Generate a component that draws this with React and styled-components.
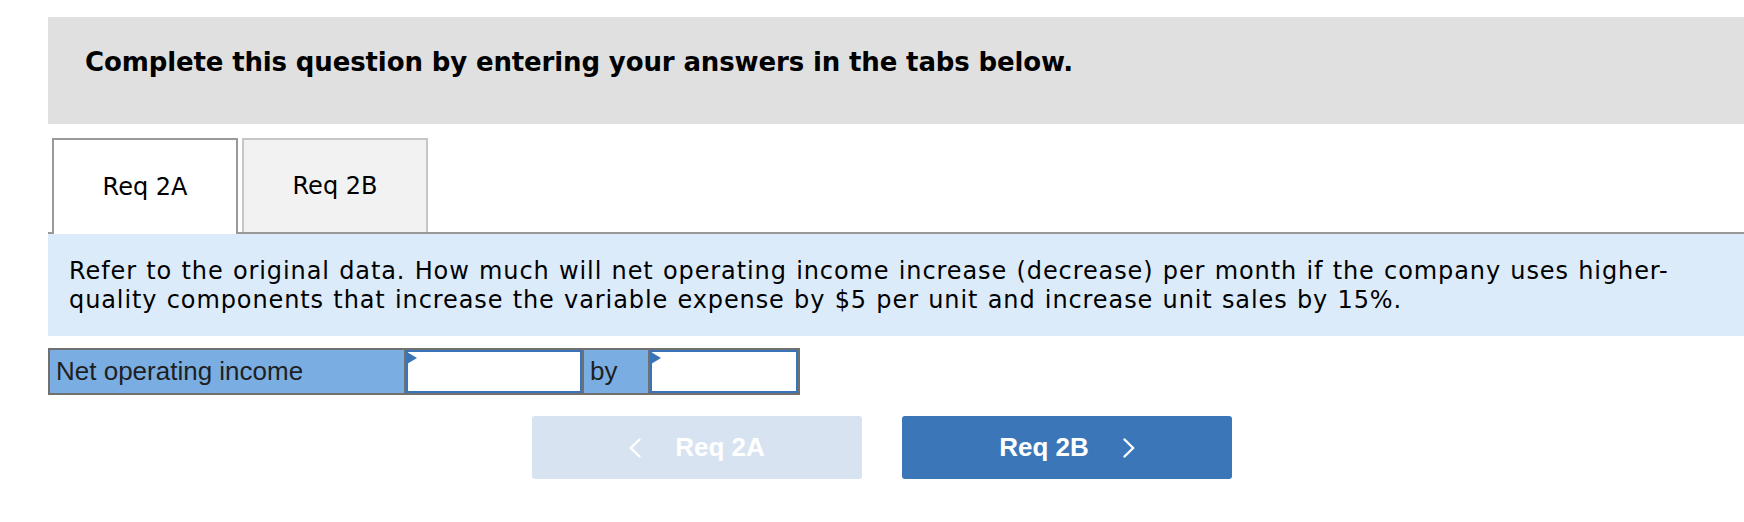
import React from 'react';
import styled, { createGlobalStyle } from 'styled-components';

const GlobalStyle = createGlobalStyle`
  html, body {
    margin: 0;
    padding: 0;
    background: #ffffff;
    overflow: hidden;
  }
`;

const Page = styled.div`
  padding: 17px 0 0 48px;
  font-family: "DejaVu Sans", Verdana, sans-serif;
  color: #000;
`;

const Instructions = styled.div`
  background: #e0e0e0;
  height: 107px;
  box-sizing: border-box;
  padding: 30px 0 0 37px;
`;

const Heading = styled.h2`
  margin: 0;
  font-size: 26px;
  line-height: 30px;
  font-weight: bold;
  letter-spacing: -0.13px;
`;

const TabBar = styled.div`
  display: flex;
  align-items: flex-end;
  gap: 4px;
  margin-top: 14px;
  padding-left: 4px;
  border-bottom: 2px solid #999999;
  height: 94px;
`;

const Tab = styled.button`
  box-sizing: border-box;
  width: 186px;
  height: ${props => (props.$active ? '96px' : '94px')};
  margin-bottom: ${props => (props.$active ? '-2px' : '0')};
  padding: 0;
  border: 2px solid ${props => (props.$active ? '#999999' : '#c6c6c6')};
  border-bottom: ${props => (props.$active ? 'none' : '0')};
  background: ${props => (props.$active ? '#ffffff' : '#f2f2f2')};
  font-family: "DejaVu Sans", Verdana, sans-serif;
  font-size: 24px;
  color: #000;
  cursor: pointer;
`;

const QuestionPanel = styled.div`
  background: #dcebf9;
  box-sizing: border-box;
  height: 102px;
  padding: 23px 50px 0 21px;
`;

const QuestionText = styled.p`
  margin: 0;
  font-size: 24px;
  line-height: 29px;
  letter-spacing: 0.9px;
  word-spacing: 0.8px;
`;

const AnswerRow = styled.div`
  display: flex;
  width: 752px;
  height: 47px;
  box-sizing: border-box;
  margin-top: 12px;
  border: 2px solid #707070;
  font-family: "Liberation Sans", Arial, sans-serif;
  font-size: 26px;
  color: #1f1f1f;
`;

const Cell = styled.div`
  position: relative;
  width: ${props => props.$width}px;
  flex: none;
  display: flex;
  align-items: center;
  box-sizing: content-box;
  padding-left: ${props => props.$pad || 0}px;
  background: ${props => (props.$label ? '#7aaee3' : '#ffffff')};
  border-right: ${props => (props.$last ? 'none' : '2px solid #707070')};
`;

const AnswerInput = styled.input`
  box-sizing: border-box;
  width: 100%;
  height: 100%;
  margin: 0;
  border: 2px solid #3a74b8;
  background: #ffffff;
  font-family: "Liberation Sans", Arial, sans-serif;
  font-size: 24px;
  outline: none;
`;

const InputFlag = styled.span`
  position: absolute;
  left: 1px;
  top: 2px;
  width: 0;
  height: 0;
  border-top: 6.5px solid transparent;
  border-bottom: 6.5px solid transparent;
  border-left: 10px solid #3a74b8;
`;

const NavRow = styled.div`
  display: flex;
  justify-content: center;
  gap: 40px;
  margin-top: 21px;
  padding-right: 28px;
`;

const NavButton = styled.button`
  width: 330px;
  height: 63px;
  border: none;
  border-radius: 3px;
  display: flex;
  align-items: center;
  justify-content: center;
  gap: 34px;
  padding: 0;
  background: ${props => (props.$disabled ? '#d7e3f1' : '#3b77b8')};
  color: #ffffff;
  font-family: "Liberation Sans", Arial, sans-serif;
  font-weight: bold;
  font-size: 26px;
  cursor: ${props => (props.$disabled ? 'default' : 'pointer')};
`;

const Chevron = ({ left }) => (
  <svg width="12" height="20" viewBox="0 0 12 20" fill="none">
    <polyline
      points={left ? '10.5,1.5 1.8,10 10.5,18.5' : '1.5,1.5 10.2,10 1.5,18.5'}
      stroke="#ffffff"
      strokeWidth="2.4"
      strokeLinecap="round"
      strokeLinejoin="round"
    />
  </svg>
);

function App() {
  return (
    <>
      <GlobalStyle />
      <Page>
        <Instructions>
          <Heading>Complete this question by entering your answers in the tabs below.</Heading>
        </Instructions>

        <TabBar>
          <Tab $active>Req 2A</Tab>
          <Tab>Req 2B</Tab>
        </TabBar>

        <QuestionPanel>
          <QuestionText>
            Refer to the original data. How much will net operating income increase (decrease) per month if the company uses higher-quality components that increase the variable expense by $5 per unit and increase unit sales by 15%.
          </QuestionText>
        </QuestionPanel>

        <AnswerRow>
          <Cell $label $width={348} $pad={6}>Net operating income</Cell>
          <Cell $width={176}>
            <AnswerInput type="text" />
            <InputFlag />
          </Cell>
          <Cell $label $width={58} $pad={6}>by</Cell>
          <Cell $width={148} $last>
            <AnswerInput type="text" />
            <InputFlag />
          </Cell>
        </AnswerRow>

        <NavRow>
          <NavButton $disabled>
            <Chevron left />
            <span>Req 2A</span>
          </NavButton>
          <NavButton>
            <span>Req 2B</span>
            <Chevron />
          </NavButton>
        </NavRow>
      </Page>
    </>
  );
}

export default App;
